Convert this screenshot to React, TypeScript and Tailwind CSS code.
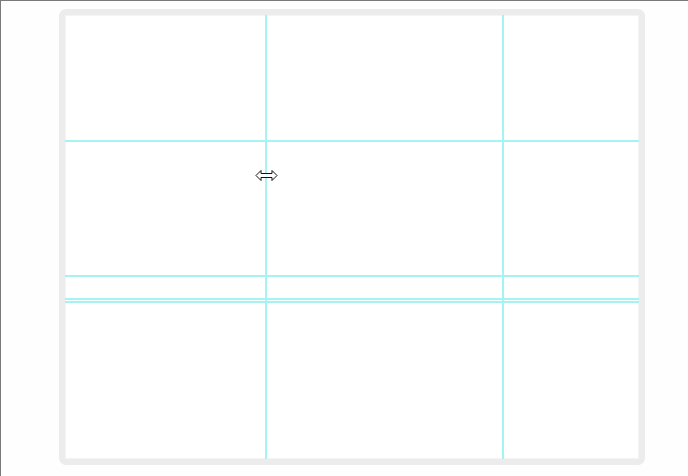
const CYAN = "bg-[#a4f4f4]";

function ResizeCursor() {
  return (
    <svg
      width="23"
      height="13"
      viewBox="0 0 23 13"
      className="absolute left-[254px] top-[168px]"
    >
      <path
        d="M1 6.5 L6 1.5 L6 4.5 L17 4.5 L17 1.5 L22 6.5 L17 11.5 L17 8.5 L6 8.5 L6 11.5 Z"
        fill="#fff"
        stroke="#111"
        strokeWidth="1"
      />
    </svg>
  );
}

function Band({ h }: { h: string }) {
  return (
    <div className={`flex ${h}`}>
      <div className="w-[200px]" />
      <div className={`w-[2px] ${CYAN}`} />
      <div className="w-[235px]" />
      <div className={`w-[2px] ${CYAN}`} />
      <div className="flex-1" />
    </div>
  );
}

function Rule() {
  return <div className={`h-[2px] ${CYAN}`} />;
}

export default function App() {
  return (
    <div className="relative w-[688px] h-[476px] bg-[#fefefe] border-t border-l border-[#7a7a7a] overflow-hidden">
      <div className="ml-[58px] mt-[8px] w-[586px] h-[456px] rounded-[7px] border-[6px] border-[#ececec] shadow-[inset_0_0_0_1px_#f4f4f4] bg-white">
        <div className="flex flex-col">
          <Band h="h-[125px]" />
          <Rule />
          <Band h="h-[133px]" />
          <Rule />
          <Band h="h-[21px]" />
          <Rule />
          <Band h="h-[1px]" />
          <Rule />
          <Band h="h-[156px]" />
        </div>
      </div>
      <ResizeCursor />
    </div>
  );
}
